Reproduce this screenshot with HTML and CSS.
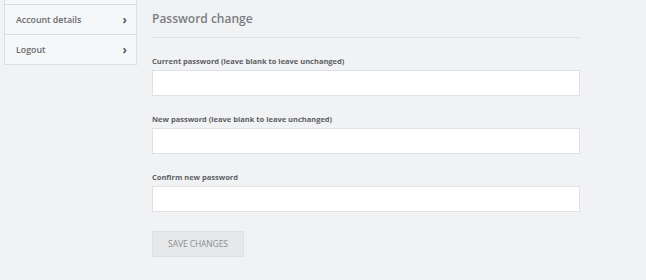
FILE: index.html
```html
<!DOCTYPE html>
<html lang="en">
  <head>
    <meta charset="UTF-8">
    <meta name="viewport" content="width=device-width, initial-scale=1.0">
    <title>Account details</title>
    <link rel="stylesheet" href="styles.css">
  </head>
  <body>
    <div class="page">
        <nav class="account-nav">
            <div class="nav-stub"></div>
            <a href="#" class="nav-item">Account details <span class="chevron">&rsaquo;</span></a>
            <a href="#" class="nav-item">Logout <span class="chevron">&rsaquo;</span></a>
        </nav>
        <main class="account-content">
            <h2 class="section-title">Password change</h2>
            <form class="password-form">
                <div class="field">
                    <label for="password_current">Current password (leave blank to leave unchanged)</label>
                    <input type="password" id="password_current" name="password_current">
                </div>
                <div class="field">
                    <label for="password_1">New password (leave blank to leave unchanged)</label>
                    <input type="password" id="password_1" name="password_1">
                </div>
                <div class="field">
                    <label for="password_2">Confirm new password</label>
                    <input type="password" id="password_2" name="password_2">
                </div>
                <button type="submit" class="save-button">Save changes</button>
            </form>
        </main>
    </div>
  </body>
</html>
```

FILE: styles.css
```css
body {
    margin: 0;
    background-color: #f1f2f4;
    font-family: "Open Sans", Arial, sans-serif;
    overflow: hidden;
}
.page {
    display: flex;
    align-items: flex-start;
    padding-left: 4px;
}
.account-nav {
    box-sizing: border-box;
    width: 133px;
    display: flex;
    flex-direction: column;
    border: 1px solid #dcdde1;
    border-top: none;
    background-color: #f6f7f9;
}
.nav-stub {
    height: 4px;
}
.nav-item {
    box-sizing: border-box;
    display: flex;
    justify-content: space-between;
    align-items: center;
    height: 30px;
    padding: 0 9px 0 11px;
    border-top: 1px solid #dcdde1;
    color: #66696d;
    font-size: 8.8px;
    font-weight: 600;
    text-decoration: none;
}
.chevron {
    font-size: 12px;
    font-weight: 700;
    color: #55585c;
}
.account-content {
    width: 428px;
    margin-left: 15px;
}
.section-title {
    margin: 10px 0 0 0;
    padding-bottom: 9px;
    border-bottom: 1px solid #dfe0e3;
    font-size: 12px;
    line-height: 18px;
    font-weight: 600;
    color: #7a7d81;
}
.password-form {
    padding-top: 18px;
}
.field {
    display: flex;
    flex-direction: column;
    margin-bottom: 18px;
}
.field label {
    font-size: 7.5px;
    line-height: 10px;
    font-weight: 700;
    color: #5d6064;
    margin-bottom: 4px;
}
.field input {
    box-sizing: border-box;
    height: 26px;
    border: 1px solid #e0e1e4;
    background-color: #fff;
    padding: 0 8px;
}
.save-button {
    margin-top: -4px;
    width: 92px;
    height: 26px;
    background-color: #e7e8ea;
    border: 1px solid #dfe0e2;
    color: #8c8e91;
    font-family: "Open Sans", Arial, sans-serif;
    font-size: 8.5px;
    text-transform: uppercase;
    letter-spacing: -0.1px;
}
```
